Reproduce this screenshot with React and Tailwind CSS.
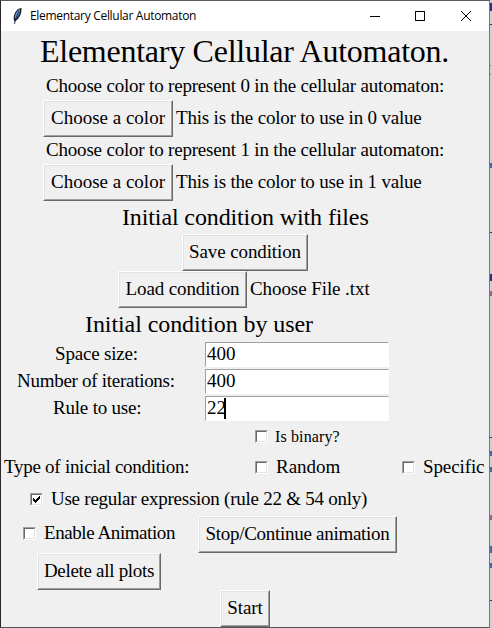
import React from "react";

const serif = "font-['Liberation_Serif',serif] whitespace-pre text-black";

function Label({ className = "", children }) {
  return <span className={`${serif} block pb-[2px] text-[19px] leading-[22px] ${className}`}>{children}</span>;
}

function Button({ className = "", children }) {
  return (
    <button
      className={`${serif} flex h-[37px] shrink-0 border border-t-white border-l-white border-r-[#696969] border-b-[#696969] bg-[#f0f0f0] text-[19px] leading-[22px] ${className}`}
    >
      <span className="flex h-full w-full items-center justify-center border border-t-[#e3e3e3] border-l-[#e3e3e3] border-r-[#a0a0a0] border-b-[#a0a0a0] pb-[2px]">
        {children}
      </span>
    </button>
  );
}

function Check({ className = "", checked }) {
  return (
    <span className={`block size-[13px] shrink-0 border border-t-[#a0a0a0] border-l-[#a0a0a0] border-r-white border-b-white ${className}`}>
      <span className="block size-full border border-t-[#696969] border-l-[#696969] border-r-[#e3e3e3] border-b-[#e3e3e3] bg-white">
        {checked && (
          <svg className="block size-[9px]" viewBox="0 0 9 9" shapeRendering="crispEdges">
            <path d="M1 3h1v3h-1zM2 4h1v3h-1zM3 5h1v3h-1zM4 4h1v3h-1zM5 3h1v3h-1zM6 2h1v3h-1zM7 1h1v3h-1z" />
          </svg>
        )}
      </span>
    </span>
  );
}

function Entry({ label, pad, value, caret, track }) {
  return (
    <div className="flex h-[27px] items-start">
      <div className={`w-[204px] shrink-0 pt-px ${pad}`}>
        <Label className={track}>{label}</Label>
      </div>
      <div className="flex h-[25px] w-[184px] items-center border border-t-[#a0a0a0] border-l-[#a0a0a0] border-r-white border-b-white bg-white pl-px">
        <Label>{value}</Label>
        {caret && <span className="-ml-[2px] h-[21px] w-[2px] bg-black" />}
      </div>
    </div>
  );
}

export default function App() {
  return (
    <div className="flex h-[628px] w-[492px] overflow-hidden bg-[#d0d0d0]">
      <main className="flex h-[628px] w-[490px] flex-col border border-t-[#5d5b5e] border-r-[#777777] border-b-[#555555] border-l-[#2d292b] bg-[#f0f0f0]">
        <header className="flex h-[30px] shrink-0 items-center bg-white">
          <svg className="ml-[10px] h-[18px] w-[12px]" viewBox="0 0 12 18">
            <path d="M3 14C2 10 3 6 6 3Q8 1 10.5 1Q11 7 7 12L4 14.500" fill="#172535" />
            <path d="M4 12C3.500 8 5 5 9 2Q9.500 6 5.500 11" fill="#65a0dc" />
            <path d="M3.500 17L4.500 12L8 4" fill="none" stroke="#172535" strokeWidth="0.9" />
          </svg>
          <span className="ml-[7px] w-[330px] font-['Open_Sans',sans-serif] text-[12px] tracking-[-0.31px] text-black">Elementary Cellular Automaton</span>
          <svg className="ml-[8px] h-[12px] w-[104px]" viewBox="0 0 104 12" fill="none" stroke="#000">
            <path d="M2 6.5h10M47.5 1.5h9v9h-9z" shapeRendering="crispEdges" />
            <path d="M93 1l10 10M103 1l-10 10" />
          </svg>
        </header>
        <div className="flex h-[42px] shrink-0 items-center pb-[2px] pl-[39px]">
          <span className={`${serif} text-[32px] leading-[36px] tracking-[-0.26px]`}>Elementary Cellular Automaton.</span>
        </div>
        <div className="flex h-[27px] shrink-0 items-center pl-[45px]"><Label className="tracking-[-0.19px]">Choose color to represent 0 in the cellular automaton:</Label></div>
        <div className="flex h-[37px] shrink-0 items-center pl-[42px]">
          <Button className="w-[130px]">Choose a color</Button>
          <Label className="ml-[3px] tracking-[-0.19px]">This is the color to use in 0 value</Label>
        </div>
        <div className="flex h-[27px] shrink-0 items-center pl-[45px]"><Label className="tracking-[-0.19px]">Choose color to represent 1 in the cellular automaton:</Label></div>
        <div className="flex h-[37px] shrink-0 items-center pl-[42px]">
          <Button className="w-[130px]">Choose a color</Button>
          <Label className="ml-[3px] tracking-[-0.19px]">This is the color to use in 1 value</Label>
        </div>
        <div className="flex h-[33px] shrink-0 items-center pb-[2px] pl-[121px]">
          <span className={`${serif} text-[24px] leading-[28px] tracking-[-0.12px]`}>Initial condition with files</span>
        </div>
        <div className="flex h-[37px] shrink-0 pl-[181px]"><Button className="w-[126px] tracking-[-0.1px]">Save condition</Button></div>
        <div className="flex h-[37px] shrink-0 items-center pl-[117px]">
          <Button className="w-[129px] tracking-[-0.12px]">Load condition</Button>
          <Label className="ml-[3px] tracking-[-0.08px]">Choose File .txt</Label>
        </div>
        <div className="flex h-[34px] shrink-0 items-center pb-[2px] pl-[84px]">
          <span className={`${serif} text-[24px] leading-[28px] tracking-[-0.08px]`}>Initial condition by user</span>
        </div>
        <Entry label="Space size:" pad="pl-[54px]" value="400" track="tracking-[-0.18px]" />
        <Entry label="Number of iterations:" pad="pl-[16px]" value="400" track="tracking-[-0.28px]" />
        <Entry label="Rule to use:" pad="pl-[52px]" value="22" track="tracking-[-0.2px]" caret />
        <div className="flex h-[27px] shrink-0 items-center pl-[254px]">
          <Check />
          <span className={`${serif} ml-[7px] text-[16px] leading-[18px] tracking-[0.13px]`}>Is binary?</span>
        </div>
        <div className="flex h-[35px] shrink-0 items-center pl-[3px]">
          <Label className="w-[251px] tracking-[-0.27px]">Type of inicial condition:</Label>
          <Check />
          <Label className="ml-[8px] w-[126px]">Random</Label>
          <Check />
          <Label className="ml-[8px] tracking-[-0.1px]">Specific</Label>
        </div>
        <div className="flex h-[31px] shrink-0 items-center pb-[2px] pl-[29px]">
          <Check checked />
          <Label className="ml-[8px] tracking-[-0.25px]">Use regular expression (rule 22 &amp; 54 only)</Label>
        </div>
        <div className="flex h-[37px] shrink-0 items-center pl-[22px]">
          <Check className="mb-[2px]" />
          <Label className="mb-[2px] ml-[8px] w-[154px] tracking-[-0.42px]">Enable Animation</Label>
          <Button className="w-[199px] tracking-[-0.28px]">Stop/Continue animation</Button>
        </div>
        <div className="flex h-[37px] shrink-0 pl-[36px]"><Button className="w-[124px] tracking-[-0.3px]">Delete all plots</Button></div>
        <div className="flex h-[37px] shrink-0 pl-[219px]"><Button className="w-[50px] tracking-[-0.1px]">Start</Button></div>
      </main>
      <svg className="h-[628px] w-[2px] shrink-0" viewBox="0 0 2 628" shapeRendering="crispEdges">
        <path d="M0 3h2v8h-2zM0 24h2v1h-2zM0 232h2v1h-2zM0 274h2v7h-2zM0 437h2v1h-2zM0 600h2v1h-2z" fill="#303078" />
        <path d="M0 163h2v5h-2zM0 451h2v5h-2zM0 467h2v5h-2zM0 546h2v7h-2zM0 563h2v5h-2z" fill="#456b9d" />
        <path d="M0 65h1v1h-1zM0 74h1v1h-1z" fill="#369b9b" />
        <path d="M0 291h2v5h-2zM0 515h2v5h-2z" fill="#886b85" />
      </svg>
    </div>
  );
}
